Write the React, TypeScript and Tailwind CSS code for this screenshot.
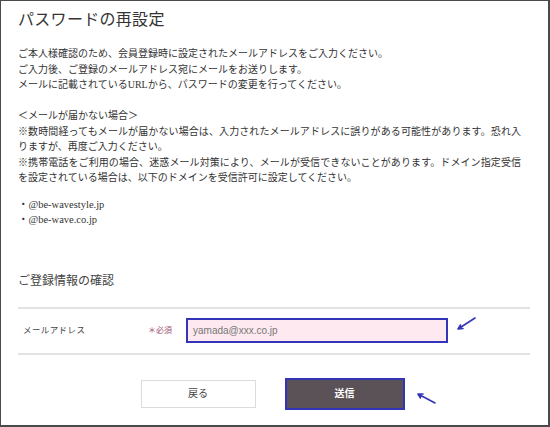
import React from "react";

const serif = '"Liberation Serif", "Noto Sans CJK JP", serif';

function Arrow({ className, d }: { className: string; d: string }) {
  return (
    <svg className={className} viewBox="0 0 20 14" fill="none" stroke="#3434b8" strokeWidth="1.6" strokeLinecap="round">
      <path d={d} />
    </svg>
  );
}

export default function App() {
  return (
    <div
      className="h-[427px] w-[550px] overflow-hidden border-t border-l border-r-2 border-b-2 border-[#4a4a4a] bg-white text-[#333]"
      style={{ fontFamily: serif }}
    >
      <div className="pl-[17px] pr-[18px] pt-[8px]">
        <h1 className="text-[16px] leading-[22px] tracking-[0.3px]">パスワードの再設定</h1>

        <div className="mt-[15px] text-[10px] leading-[15.5px]">
          <p>ご本人様確認のため、会員登録時に設定されたメールアドレスをご入力ください。</p>
          <p>ご入力後、ご登録のメールアドレス宛にメールをお送りします。</p>
          <p>メールに記載されているURLから、パスワードの変更を行ってください。</p>
        </div>

        <div className="mt-[15.5px] w-[503px] text-[10px] leading-[15.5px]">
          <p>＜メールが届かない場合＞</p>
          <p className="[text-align-last:justify]">
            ※数時間経ってもメールが届かない場合は、入力されたメールアドレスに誤りがある可能性があります。恐れ入
          </p>
          <p>りますが、再度ご入力ください。</p>
          <p className="[text-align-last:justify]">
            ※携帯電話をご利用の場合、迷惑メール対策により、メールが受信できないことがあります。ドメイン指定受信
          </p>
          <p>を設定されている場合は、以下のドメインを受信許可に設定してください。</p>
        </div>

        <div className="mt-[11px] text-[10.5px] leading-[15.5px]">
          <p>・@be-wavestyle.jp</p>
          <p>・@be-wave.co.jp</p>
        </div>

        <h2 className="mt-[45px] text-[12px] leading-[16px] text-[#444]">ご登録情報の確認</h2>

        <div className="relative mt-[18px] flex h-[48px] items-center border-y-2 border-[#e2e2e2]">
          <span className="w-[130px] pl-[5px] text-[8.5px] tracking-[0.4px] text-[#444]">メールアドレス</span>
          <span className="w-[38px] text-[8px] text-[#a25272]">＊必須</span>
          <div className="flex h-[25px] w-[262px] items-center border-2 border-[#3434b8] bg-[#fde9ef] pl-[5px]">
            <span className="text-[10px] text-[#777]" style={{ fontFamily: '"Liberation Sans", Arial, sans-serif' }}>
              yamada@xxx.co.jp
            </span>
          </div>
          <Arrow className="absolute left-[438px] top-[8px] h-[14px] w-[20px]" d="M19 1 L2 12 M2 12 L7 11.5 M2 12 L4.5 8" />
        </div>

        <div className="relative mt-[23px] flex items-center justify-center gap-[29px] pr-[3px]">
          <button className="h-[28px] w-[115px] border border-[#dcdcdc] bg-white text-[10px] text-[#444]">戻る</button>
          <button className="h-[32px] w-[120px] border-2 border-[#3434b8] bg-[#5a5256] text-[10px] font-bold text-white">送信</button>
          <Arrow className="absolute left-[398px] top-[14px] h-[14px] w-[20px]" d="M19 11 L2 2 M2 2 L7 2 M2 2 L4.5 6" />
        </div>
      </div>
    </div>
  );
}
